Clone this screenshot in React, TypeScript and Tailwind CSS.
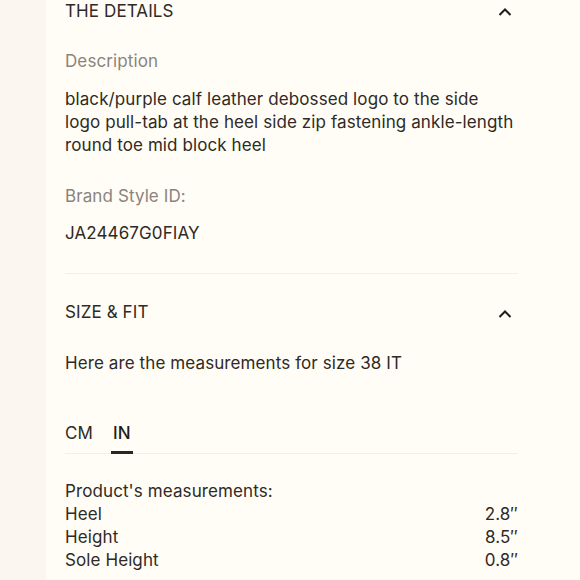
import React from "react";

const Chevron = () => (
  <svg width="14" height="10" viewBox="0 0 14 10" fill="none" className="block">
    <path d="M1.5 8L7 2.5L12.5 8" stroke="#1f1c1a" strokeWidth="2" />
  </svg>
);

export default function App() {
  return (
    <div
      className="w-[580px] h-[580px] overflow-hidden flex bg-[#fffdf5] text-[#2e2a27]"
      style={{ fontFamily: "Inter, 'Liberation Sans', sans-serif" }}
    >
      <div className="w-[46px] shrink-0 bg-[#fbf7f0]" />
      <div className="w-[472px] pl-[19px] text-[17px] leading-[23px] tracking-[0.1px]">
        <div className="flex items-center justify-between h-[22px]">
          <span>THE DETAILS</span>
          <span className="mr-[6px] mt-[2px]"><Chevron /></span>
        </div>
        <div className="mt-[28px] text-[#8a847e]">Description</div>
        <div className="mt-[15px] whitespace-nowrap">
          black/purple calf leather debossed logo to the side
          <br />
          logo pull-tab at the heel side zip fastening ankle-length
          <br />
          round toe mid block heel
        </div>
        <div className="mt-[28px] text-[#8a847e]">Brand Style ID:</div>
        <div className="mt-[14px]">JA24467G0FIAY</div>
        <div className="mt-[28px] h-[1px] bg-[#f3efe4]" />
        <div className="mt-[27px] flex items-center justify-between">
          <span>SIZE &amp; FIT</span>
          <span className="mr-[6px] mt-[2px]"><Chevron /></span>
        </div>
        <div className="mt-[28px]">Here are the measurements for size 38 IT</div>
        <div className="mt-[47px] flex gap-[18px] border-b border-[#f3efe4]">
          <span className="pb-[7px]">CM</span>
          <span className="pb-[6px] px-[2px] font-medium text-[#1f1c1a] border-b-[3px] border-[#2a2624] -mb-[1px]">IN</span>
        </div>
        <div className="mt-[26px]">Product's measurements:</div>
        <div className="flex justify-between"><span>Heel</span><span>2.8″</span></div>
        <div className="flex justify-between"><span>Height</span><span>8.5″</span></div>
        <div className="flex justify-between"><span>Sole Height</span><span>0.8″</span></div>
      </div>
      <div className="flex-1 bg-[#fffdf6]" />
    </div>
  );
}
